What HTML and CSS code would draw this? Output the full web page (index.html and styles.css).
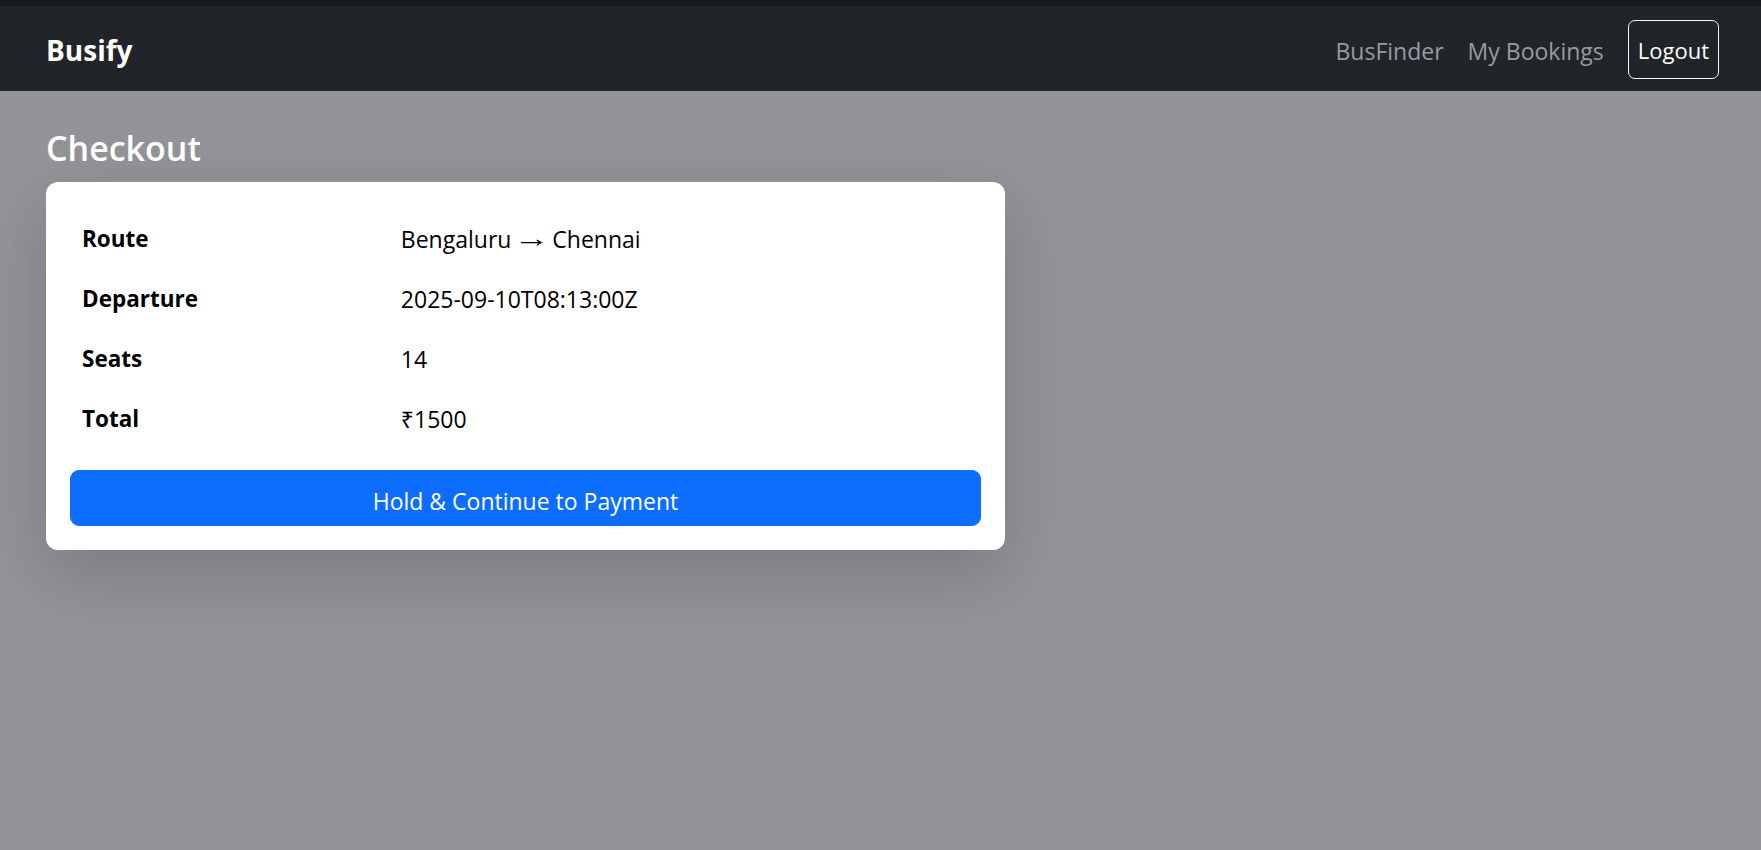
FILE: index.html
```html
<!DOCTYPE html>
<html lang="en">
<head>
<meta charset="utf-8">
<title>Busify - Checkout</title>
<link rel="stylesheet" href="styles.css">
</head>
<body>
<div class="topstrip"></div>
<nav class="navbar">
  <a class="brand" href="#">Busify</a>
  <div class="nav-right">
    <a class="nav-link" href="#">BusFinder</a>
    <a class="nav-link" href="#">My Bookings</a>
    <button class="btn-logout" type="button">Logout</button>
  </div>
</nav>
<main class="container">
  <h4 class="page-title">Checkout</h4>
  <div class="card">
    <table class="summary">
      <tbody>
        <tr><th>Route</th><td>Bengaluru <span class="arrow">→</span> Chennai</td></tr>
        <tr><th>Departure</th><td>2025-09-10T08:13:00Z</td></tr>
        <tr><th>Seats</th><td>14</td></tr>
        <tr><th>Total</th><td>₹1500</td></tr>
      </tbody>
    </table>
    <button class="btn-primary" type="button">Hold &amp; Continue to Payment</button>
  </div>
</main>
</body>
</html>
```
FILE: styles.css
```css
* { box-sizing: border-box; }
html, body { margin: 0; padding: 0; }
body {
  background: #939498;
  font-family: "Open Sans", "Noto Sans", sans-serif;
  font-size: 23px;
  line-height: 36px;
  color: #000;
  height: 850px;
}
.topstrip { height: 6px; background: #18191b; }
.navbar {
  height: 85px;
  background: #212529;
  display: flex;
  align-items: center;
  justify-content: space-between;
  padding: 2px 42px 0 46px;
}
.brand {
  color: #fff;
  font-weight: 700;
  font-size: 28px;
  text-decoration: none;
  line-height: 45px;
  padding-top: 2px;
}
.nav-right { display: flex; align-items: center; }
.nav-link {
  color: #9a9b9e;
  text-decoration: none;
  padding: 2px 12px 0;
}
.btn-logout {
  margin-left: 12px;
  font: inherit;
  font-size: 22px;
  color: #fff;
  background: transparent;
  border: 1px solid #f8f9fa;
  border-radius: 7px;
  padding: 11px 9px 10px;
  line-height: 36px;
}
.container { padding: 36px 42px 0 46px; }
.page-title {
  margin: -1px 0 12px;
  padding-top: 1px;
  font-size: 34px;
  font-weight: 600;
  line-height: 43px;
  color: #fff;
}
.card {
  width: 959px;
  background: #fff;
  border-radius: 12px;
  box-shadow: 0 24px 72px rgba(0,0,0,.175);
  padding: 24px;
}
.summary { width: 100%; border-collapse: collapse; margin-bottom: 24px; }
.summary th, .summary td {
  padding: 15px 12px 9px;
  text-align: left;
  vertical-align: top;
  line-height: 36px;
}
.summary th { width: 35%; font-weight: 700; font-size: 22.5px; }
.summary td { font-weight: 400; }
.arrow {
  font-family: "Liberation Sans", "DejaVu Sans", sans-serif;
  font-size: 25px;
  line-height: 1;
  display: inline-block;
  margin: 0 2px;
  transform: translateY(-1px) scaleX(1.45);
}
.btn-primary {
  display: block;
  width: 100%;
  font: inherit;
  line-height: 36px;
  color: #fff;
  background: #0d6efd;
  border: 1px solid #0d6efd;
  border-radius: 9px;
  padding: 12px 18px 6px;
}
```
